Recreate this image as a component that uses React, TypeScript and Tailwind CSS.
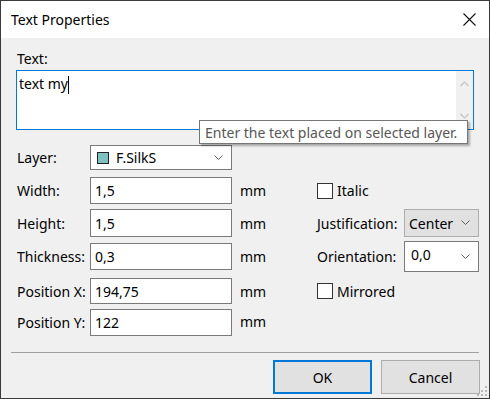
import React from 'react';

// chevron used in the combo boxes
const Chevron = () => (
  <svg width="9" height="6" viewBox="0 0 9 6" className="shrink-0">
    <path d="M0.5 0.5 L4.5 4.5 L8.5 0.5" fill="none" stroke="#606060" strokeWidth="1" />
  </svg>
);

const Field = ({ value, h = 'h-[27px]' }: { value: string; h?: string }) => (
  <div className={`w-[142px] ${h} bg-white border border-[#7a7a7a] flex items-center pl-[4px] text-black`}>
    {value}
  </div>
);

const Check = ({ label }: { label: string }) => (
  <div className="flex items-center gap-[4px]">
    <div className="w-[16px] h-[16px] bg-white border border-[#333333]" />
    <span>{label}</span>
  </div>
);

export default function App() {
  return (
    <div className="w-[490px] h-[399px] bg-[#f0f0f0] border border-[#3a3a3a] flex flex-col font-['Noto_Sans',sans-serif] text-[14px] text-black relative overflow-hidden">
      {/* title bar */}
      <div className="h-[37px] bg-white flex items-center justify-between pl-[10px] pr-[13px] shrink-0">
        <span className="text-[14px] -mt-[1px]">Text Properties</span>
        <svg width="13" height="13" viewBox="0 0 13 13">
          <path d="M0.5 0.5 L12.5 12.5 M12.5 0.5 L0.5 12.5" stroke="#111" strokeWidth="1.1" />
        </svg>
      </div>

      <div className="flex flex-col pl-[15px] relative">
        <div className="mt-[10px] h-[21px] leading-[21px] pl-[1px]">Text:</div>

        {/* text area */}
        <div className="mt-[1px] w-[458px] h-[60px] bg-white border border-[#0078d7] flex">
          <div className="flex-1 pl-[2px] pt-[3px] flex items-start">
            <span className="leading-[20px]">text my</span>
            <span className="w-[1px] h-[18px] bg-black mt-[2px]" />
          </div>
          <div className="w-[17px] bg-[#f0f0f0] flex flex-col items-center justify-between py-[10px]">
            <svg width="9" height="6" viewBox="0 0 9 6">
              <path d="M0.5 5 L4.5 1 L8.5 5" fill="none" stroke="#c2c2c2" strokeWidth="1.2" />
            </svg>
            <svg width="9" height="6" viewBox="0 0 9 6">
              <path d="M0.5 1 L4.5 5 L8.5 1" fill="none" stroke="#c2c2c2" strokeWidth="1.2" />
            </svg>
          </div>
        </div>

        {/* tooltip */}
        <div className="absolute left-[198px] top-[82px] w-[269px] h-[24px] bg-white border border-[#767676] shadow-[2px_2px_2px_rgba(0,0,0,0.3)] flex items-center pl-[5px] text-[#575757] whitespace-nowrap">
          Enter the text placed on selected layer.
        </div>

        {/* properties */}
        <div className="mt-[15px] flex flex-col pl-[1px]">
          <div className="flex h-[32px] items-start">
            <div className="w-[73px] h-[25px] flex items-center">Layer:</div>
            <div className="w-[142px] h-[25px] bg-white border border-[#7a7a7a] flex items-center pl-[6px] pr-[8px]">
              <div className="w-[12px] h-[12px] bg-[#7fc0c0] border border-[#222]" />
              <span className="ml-[7px] flex-1">F.SilkS</span>
              <Chevron />
            </div>
          </div>

          <div className="flex h-[32px] items-start">
            <div className="w-[73px] h-[27px] flex items-center">Width:</div>
            <Field value="1,5" />
            <div className="w-[85px] h-[27px] flex items-center pl-[8px]">mm</div>
            <div className="h-[27px] flex items-center"><Check label="Italic" /></div>
          </div>

          <div className="flex h-[32px] items-start">
            <div className="w-[73px] h-[28px] flex items-center">Height:</div>
            <Field value="1,5" h="h-[28px]" />
            <div className="w-[85px] h-[28px] flex items-center pl-[8px]">mm</div>
            <div className="w-[87px] h-[28px] flex items-center">Justification:</div>
            <div className="w-[75px] h-[28px] bg-[#e1e1e1] border border-[#adadad] flex items-center pl-[4px] pr-[8px]">
              <span className="flex-1">Center</span>
              <Chevron />
            </div>
          </div>

          <div className="flex h-[35px] items-start">
            <div className="w-[73px] h-[27px] mt-[2px] flex items-center">Thickness:</div>
            <div className="mt-[2px]"><Field value="0,3" /></div>
            <div className="w-[85px] h-[27px] mt-[2px] flex items-center pl-[8px]">mm</div>
            <div className="w-[87px] h-[31px] flex items-center">Orientation:</div>
            <div className="w-[75px] h-[31px] bg-white border border-[#7a7a7a] flex items-center pl-[6px] pr-[8px]">
              <span className="flex-1 -mt-[5px]">0,0</span>
              <Chevron />
            </div>
          </div>

          <div className="flex h-[33px] items-start">
            <div className="w-[73px] h-[26px] mt-[2px] flex items-center">Position X:</div>
            <div className="mt-[2px]"><Field value="194,75" h="h-[26px]" /></div>
            <div className="w-[85px] h-[26px] mt-[2px] flex items-center pl-[8px]">mm</div>
            <div className="h-[26px] mt-[2px] flex items-center"><Check label="Mirrored" /></div>
          </div>

          <div className="flex h-[28px] items-start">
            <div className="w-[73px] h-[27px] flex items-center">Position Y:</div>
            <Field value="122" />
            <div className="w-[85px] h-[24px] flex items-center pl-[8px]">mm</div>
          </div>
        </div>
      </div>

      {/* separator */}
      <div className="mt-[15px] ml-[10px] w-[468px] h-[1px] bg-[#a0a0a0]" />

      {/* buttons */}
      <div className="mt-[7px] flex justify-end gap-[9px] pr-[9px]">
        <button className="w-[99px] h-[34px] bg-[#e1e1e1] border-2 border-[#0078d7] text-black">OK</button>
        <button className="w-[99px] h-[34px] bg-[#e1e1e1] border border-[#adadad] text-black">Cancel</button>
      </div>

      {/* size grip */}
      <svg className="absolute right-[1px] bottom-[1px]" width="11" height="11" viewBox="0 0 11 11">
        <g fill="#b8b8b8">
          <rect x="8" y="0" width="2" height="2" />
          <rect x="4" y="4" width="2" height="2" />
          <rect x="8" y="4" width="2" height="2" />
          <rect x="0" y="8" width="2" height="2" />
          <rect x="4" y="8" width="2" height="2" />
          <rect x="8" y="8" width="2" height="2" />
        </g>
      </svg>
    </div>
  );
}
